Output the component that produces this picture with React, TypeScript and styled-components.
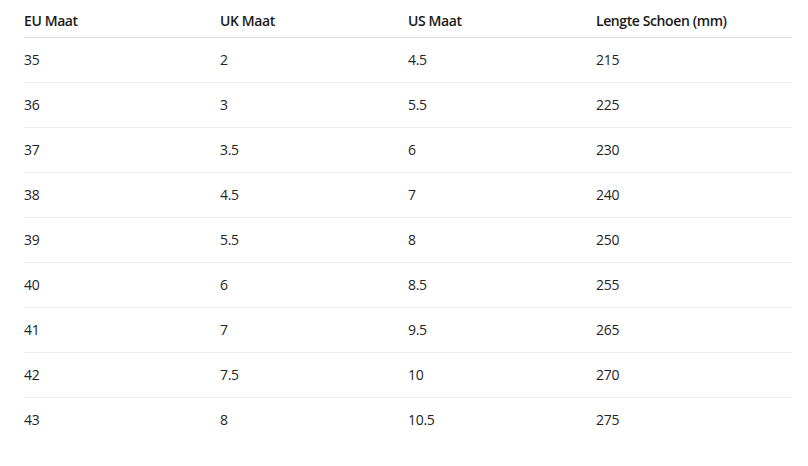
import React from "react";
import styled, { createGlobalStyle } from "styled-components";

const Global = createGlobalStyle`
  html, body { margin: 0; padding: 0; background: #ffffff; }
  body { font-family: "Segoe UI", "Open Sans", "Noto Sans", sans-serif; color: #1f1f1f; }
`;

const Page = styled.div`
  padding: 0 16px 0 24px;
`;

const Table = styled.table`
  width: 768px;
  border-collapse: collapse;
  table-layout: fixed;
  font-size: 14px;
  line-height: 20px;
`;

const Col = styled.col<{ $w: number }>`
  width: ${(p) => p.$w}px;
`;

const Th = styled.th`
  text-align: left;
  font-weight: 600;
  letter-spacing: -0.4px;
  padding: 11px 0 6px 0;
  border-bottom: 1px solid #d9d9d9;
  color: #1a1a1a;
`;

const Tr = styled.tr`
  border-bottom: 1px solid #ececec;
  &:last-child { border-bottom: none; }
`;

const Td = styled.td`
  padding: 12px 0;
  font-weight: 400;
  letter-spacing: -0.3px;
  color: #242424;
`;

const rows: string[][] = [
  ["35", "2", "4.5", "215"],
  ["36", "3", "5.5", "225"],
  ["37", "3.5", "6", "230"],
  ["38", "4.5", "7", "240"],
  ["39", "5.5", "8", "250"],
  ["40", "6", "8.5", "255"],
  ["41", "7", "9.5", "265"],
  ["42", "7.5", "10", "270"],
  ["43", "8", "10.5", "275"],
];

export default function App() {
  return (
    <>
      <Global />
      <Page>
        <Table>
          <colgroup>
            <Col $w={196} />
            <Col $w={188} />
            <Col $w={188} />
            <Col $w={196} />
          </colgroup>
          <thead>
            <tr>
              <Th>EU Maat</Th>
              <Th>UK Maat</Th>
              <Th>US Maat</Th>
              <Th>Lengte Schoen (mm)</Th>
            </tr>
          </thead>
          <tbody>
            {rows.map((r) => (
              <Tr key={r[0]}>
                {r.map((c, i) => (
                  <Td key={i}>{c}</Td>
                ))}
              </Tr>
            ))}
          </tbody>
        </Table>
      </Page>
    </>
  );
}
